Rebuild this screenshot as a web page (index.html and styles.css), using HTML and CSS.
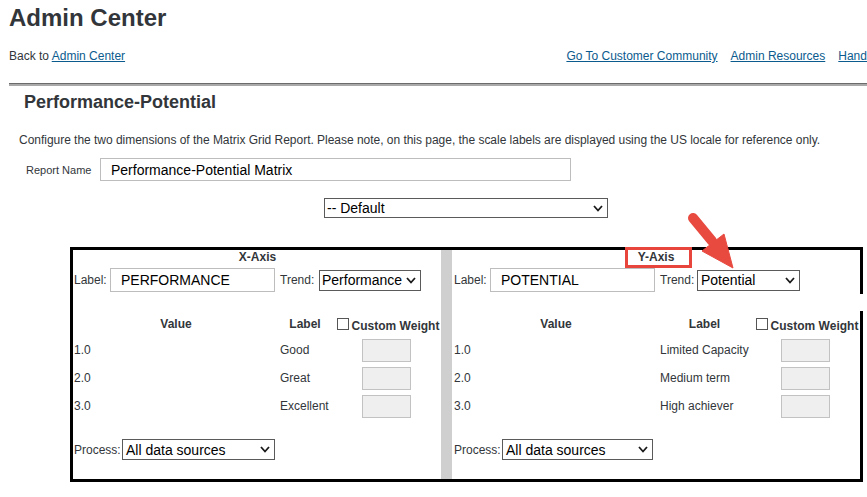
FILE: index.html
```html
<!DOCTYPE html>
<html>
<head>
<meta charset="utf-8">
<title>Admin Center</title>
<link rel="stylesheet" href="styles.css">
</head>
<body>
<h1 class="app-title">Admin Center</h1>
<div class="topnav">
  <div class="back">Back to <a href="#">Admin Center</a></div>
  <div class="links">
    <a href="#">Go To Customer Community</a>
    <a href="#">Admin Resources</a>
    <a href="#">Handbook</a>
  </div>
</div>
<div class="rule"></div>

<h2 class="page-title">Performance-Potential</h2>
<p class="desc">Configure the two dimensions of the Matrix Grid Report. Please note, on this page, the scale labels are displayed using the US locale for reference only.</p>

<div class="name-row">
  <label class="name-label">Report Name</label>
  <input class="text-input name-input" type="text" value="Performance-Potential Matrix">
</div>

<div class="default-row">
  <div class="select default-select"><span>-- Default</span><svg class="chev" viewBox="0 0 10 7"><polyline points="1,1 5,5.5 9,1"/></svg></div>
</div>

<div class="matrix">
  <div class="axis axis-x">
    <div class="axis-title"><span>X-Axis</span></div>
    <div class="label-row">
      <span class="field-label lab">Label:</span>
      <input class="text-input axis-input" type="text" value="PERFORMANCE">
      <span class="field-label trend">Trend:</span>
      <div class="select trend-select"><span>Performance</span><svg class="chev" viewBox="0 0 10 7"><polyline points="1,1 5,5.5 9,1"/></svg></div>
    </div>
    <div class="grid">
      <div class="hcell hvalue">Value</div>
      <div class="hcell hlabel">Label</div>
      <div class="hcell hweight"><input type="checkbox" class="check"><span>Custom Weight</span></div>

      <div class="cell value">1.0</div><div class="cell lbl">Good</div><div class="cell weight"><input class="w-input" type="text"></div>
      <div class="cell value">2.0</div><div class="cell lbl">Great</div><div class="cell weight"><input class="w-input" type="text"></div>
      <div class="cell value">3.0</div><div class="cell lbl">Excellent</div><div class="cell weight"><input class="w-input" type="text"></div>
    </div>
    <div class="process-row">
      <span class="field-label proc">Process:</span>
      <div class="select proc-select"><span>All data sources</span><svg class="chev" viewBox="0 0 10 7"><polyline points="1,1 5,5.5 9,1"/></svg></div>
    </div>
  </div>

  <div class="divider"></div>

  <div class="axis axis-y">
    <div class="axis-title"><span class="highlight">Y-Axis</span></div>
    <div class="label-row">
      <span class="field-label lab">Label:</span>
      <input class="text-input axis-input" type="text" value="POTENTIAL">
      <span class="field-label trend">Trend:</span>
      <div class="select trend-select"><span>Potential</span><svg class="chev" viewBox="0 0 10 7"><polyline points="1,1 5,5.5 9,1"/></svg></div>
    </div>
    <div class="grid">
      <div class="hcell hvalue">Value</div>
      <div class="hcell hlabel">Label</div>
      <div class="hcell hweight"><input type="checkbox" class="check"><span>Custom Weight</span></div>

      <div class="cell value">1.0</div><div class="cell lbl">Limited Capacity</div><div class="cell weight"><input class="w-input" type="text"></div>
      <div class="cell value">2.0</div><div class="cell lbl">Medium term</div><div class="cell weight"><input class="w-input" type="text"></div>
      <div class="cell value">3.0</div><div class="cell lbl">High achiever</div><div class="cell weight"><input class="w-input" type="text"></div>
    </div>
    <div class="process-row">
      <span class="field-label proc">Process:</span>
      <div class="select proc-select"><span>All data sources</span><svg class="chev" viewBox="0 0 10 7"><polyline points="1,1 5,5.5 9,1"/></svg></div>
    </div>
  </div>
</div>

<svg class="arrow" viewBox="0 0 55 62" width="55" height="62">
  <line x1="8" y1="8" x2="27" y2="31" class="arrow-shaft"/>
  <polygon points="17,41 39,24 48,58" class="arrow-head"/>
</svg>
</body>
</html>
```

FILE: styles.css
```css
html, body {
  margin: 0;
  padding: 0;
}

body {
  position: relative;
  width: 867px;
  height: 497px;
  overflow: hidden;
  background: #ffffff;
  color: #32363a;
  font-family: "Liberation Sans", Arial, sans-serif;
}

.app-title {
  margin: 0;
  padding: 2px 0 0 9px;
  font-size: 24px;
  line-height: 32px;
  font-weight: bold;
  color: #32363a;
}

.topnav {
  display: flex;
  align-items: center;
  width: 884px;
  height: 14px;
  margin-top: 15px;
  padding-left: 9px;
  font-size: 12px;
}

.topnav a {
  color: #0b5b8e;
  text-decoration: underline;
}

.links {
  display: flex;
  gap: 13px;
  margin-left: auto;
  white-space: nowrap;
}

.rule {
  margin: 20px 0 0 9px;
  height: 2px;
  border-top: 1px solid #6b6b6b;
  background: #a9a9a9;
}

.page-title {
  margin: 6px 0 0;
  padding-left: 24px;
  font-size: 18px;
  line-height: 20px;
  font-weight: bold;
  color: #32363a;
}

.desc {
  margin: 21px 0 0;
  padding-left: 19px;
  font-size: 12px;
  line-height: 14px;
  letter-spacing: -0.025px;
  white-space: nowrap;
}

.name-row {
  display: flex;
  align-items: center;
  margin-top: 11px;
  padding-left: 26px;
}

.name-label {
  width: 74px;
  font-size: 11px;
}

.text-input {
  box-sizing: border-box;
  margin: 0;
  border: 1px solid #bdbdbd;
  background: #fff;
  color: #000;
  font-family: "Liberation Sans", Arial, sans-serif;
  font-size: 14px;
  padding: 0 0 0 10px;
  outline: none;
}

.name-input {
  width: 471px;
  height: 23px;
}

.default-row {
  margin-top: 17px;
  padding-left: 324px;
}

.select {
  box-sizing: border-box;
  display: flex;
  align-items: center;
  border: 1px solid #5a5a5a;
  background: #fff;
  color: #000;
  font-size: 14px;
  padding-left: 2px;
  white-space: nowrap;
}

.chev {
  width: 10px;
  height: 7px;
  margin-left: auto;
  margin-right: 4px;
  flex: none;
}

.chev polyline {
  fill: none;
  stroke: #1a1a1a;
  stroke-width: 1.8;
}

.default-select {
  width: 284px;
  height: 20px;
}

.matrix {
  position: relative;
  box-sizing: border-box;
  display: flex;
  width: 793px;
  height: 235px;
  margin: 29px 0 0 70px;
  border: 3px solid #000;
}

.matrix::after {
  content: "";
  position: absolute;
  right: -3px;
  top: 44px;
  width: 3px;
  height: 17px;
  background: #fff;
}

.axis-x {
  width: 368px;
  padding-left: 1px;
  box-sizing: border-box;
}

.axis-y {
  width: 408px;
  padding-left: 2px;
  box-sizing: border-box;
}

.divider {
  width: 11px;
  background: #cfcfcf;
}

.axis-title {
  height: 14px;
  text-align: center;
  font-size: 12px;
  line-height: 14px;
  font-weight: bold;
}

.axis-y .axis-title {
  padding-right: 2px;
}

.highlight {
  position: relative;
}

.highlight::after {
  content: "";
  position: absolute;
  left: -13px;
  right: -18px;
  top: -3px;
  bottom: -4px;
  border: 3px solid #e8453c;
}

.label-row {
  display: flex;
  align-items: center;
  height: 24px;
  margin-top: 4px;
}

.field-label {
  font-size: 12px;
  color: #32363a;
}

.lab {
  width: 36px;
}

.axis-input {
  width: 165px;
  height: 24px;
}

.trend {
  width: 39px;
  margin-left: 5px;
}

.axis-y .trend {
  width: 37px;
}

.trend-select {
  width: 102px;
  height: 21px;
}

.axis-y .trend-select {
  width: 103px;
  padding-left: 3px;
}

.grid {
  display: grid;
  grid-template-rows: 19px 28px 28px 28px;
  margin-top: 25px;
}

.axis-x .grid {
  grid-template-columns: 204px 54px 109px;
}

.axis-y .grid {
  grid-template-columns: 204px 93px 109px;
}

.hcell {
  display: flex;
  align-items: center;
  justify-content: center;
  align-self: start;
  height: 14px;
  font-size: 12px;
  font-weight: bold;
}

.hweight {
  gap: 3px;
  padding-left: 3px;
}

.hweight span {
  transform: translateY(2px);
}

.check {
  appearance: none;
  -webkit-appearance: none;
  box-sizing: border-box;
  width: 12px;
  height: 12px;
  margin: 0;
  border: 1px solid #555;
  background: #fff;
}

.cell {
  display: flex;
  align-items: center;
  font-size: 12px;
}

.lbl {
  padding-left: 2px;
  white-space: nowrap;
}

.weight {
  justify-content: center;
  padding-right: 1px;
}

.w-input {
  box-sizing: border-box;
  width: 49px;
  height: 23px;
  margin: 0;
  border: 1px solid #c2c2c2;
  background: #efefef;
  outline: none;
}

.process-row {
  display: flex;
  align-items: center;
  margin-top: 19px;
  height: 21px;
}

.proc {
  width: 48px;
}

.proc-select {
  width: 153px;
  height: 21px;
  padding-left: 3px;
}

.axis-y .proc-select {
  width: 151px;
}

.arrow {
  position: absolute;
  left: 685px;
  top: 210px;
  overflow: visible;
}

.arrow-shaft {
  stroke: #e84a40;
  stroke-width: 10;
  stroke-linecap: round;
}

.arrow-head {
  fill: #e84a40;
  stroke: #e84a40;
  stroke-width: 1;
  stroke-linejoin: round;
}
```
